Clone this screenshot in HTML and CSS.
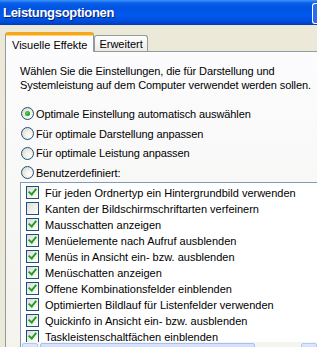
FILE: index.html
```html
<!DOCTYPE html>
<html lang="de">
<head>
    <meta charset="UTF-8">
    <title>Leistungsoptionen</title>
    <link rel="stylesheet" href="styles.css">
</head>
<body>
    <div class="window">
        <!-- Titelleiste -->
        <div class="titlebar">
            <span class="title">Leistungsoptionen</span>
            <span class="title-btn"></span>
        </div>

        <div class="content">
            <!-- Registerkarten -->
            <div class="tabs">
                <div class="tab active">Visuelle Effekte</div>
                <div class="tab">Erweitert</div>
            </div>

            <div class="page">
                <p class="intro">Wählen Sie die Einstellungen, die für Darstellung und<br>Systemleistung auf dem Computer verwendet werden sollen.</p>

                <div class="options">
                    <label class="option"><span class="radio checked"></span>Optimale Einstellung automatisch auswählen</label>
                    <label class="option"><span class="radio"></span>Für optimale Darstellung anpassen</label>
                    <label class="option"><span class="radio"></span>Für optimale Leistung anpassen</label>
                    <label class="option"><span class="radio"></span>Benutzerdefiniert:</label>
                </div>

                <div class="listbox">
                    <div class="items">
                        <div class="item"><span class="check on"></span>Für jeden Ordnertyp ein Hintergrundbild verwenden</div>
                        <div class="item"><span class="check"></span>Kanten der Bildschirmschriftarten verfeinern</div>
                        <div class="item"><span class="check on"></span>Mausschatten anzeigen</div>
                        <div class="item"><span class="check on"></span>Menüelemente nach Aufruf ausblenden</div>
                        <div class="item"><span class="check on"></span>Menüs in Ansicht ein- bzw. ausblenden</div>
                        <div class="item"><span class="check on"></span>Menüschatten anzeigen</div>
                        <div class="item"><span class="check on"></span>Offene Kombinationsfelder einblenden</div>
                        <div class="item"><span class="check on"></span>Optimierten Bildlauf für Listenfelder verwenden</div>
                        <div class="item"><span class="check on"></span>Quickinfo in Ansicht ein- bzw. ausblenden</div>
                        <div class="item"><span class="check on"></span>Taskleistenschaltfächen einblenden</div>
                    </div>
                    <!-- horizontale Bildlaufleiste -->
                    <div class="hscroll">
                        <span class="sb-arrow"></span>
                        <span class="sb-thumb"></span>
                        <span class="sb-track"></span>
                        <span class="sb-arrow"></span>
                    </div>
                </div>
            </div>
        </div>
    </div>
</body>
</html>
```

FILE: styles.css
```css
body {
    margin: 0;
    overflow: hidden;
    font-family: "Liberation Sans", Arial, sans-serif;
    font-size: 11px;
    color: #000;
    background: #ece9d8;
}
.window {
    width: 317px;
    height: 347px;
    overflow: hidden;
    background: #ece9d8;
}
.titlebar {
    height: 25px;
    display: flex;
    align-items: center;
    justify-content: space-between;
    background: linear-gradient(#3d95ff 0, #0a5fe8 3px, #0054e3 8px, #0058ee 16px, #004bd8 22px, #0039b8 25px);
    box-sizing: border-box;
    padding: 0 0 0 3px;
}
.title {
    color: #fff;
    font-family: "Liberation Sans", Arial, sans-serif;
    font-weight: bold;
    font-size: 13px;
    letter-spacing: -0.3px;
    text-shadow: 1px 1px 0 #0a1e6e;
    margin-top: -1px;
}
.title-btn {
    width: 4px;
    height: 19px;
    margin-top: 1px;
    border: 1px solid #fff;
    border-right: none;
    border-radius: 3px 0 0 3px;
    background: #2c6cf2;
}
.content {
    padding: 7px 0 0 5px;
}
.tabs {
    display: flex;
    align-items: flex-end;
    height: 19px;
    position: relative;
    z-index: 1;
}
.tab {
    height: 16px;
    box-sizing: border-box;
    padding: 1px 4px 0 4px;
    border: 1px solid #919b9c;
    border-bottom: none;
    border-radius: 3px 3px 0 0;
    background: linear-gradient(#fefefe, #ecebe6);
    line-height: 15px;
}
.tab.active {
    height: 20px;
    margin-bottom: -1px;
    padding: 3px 6px 0 6px;
    border-top: 3px solid #f5a623;
    background: #fcfcfe;
    box-shadow: inset 0 1px 0 #ffd86b;
}
.page {
    width: 330px;
    height: 300px;
    box-sizing: border-box;
    border-top: 1px solid #919b9c;
    border-left: 1px solid #919b9c;
    background: linear-gradient(#fcfcfe, #f4f3ee);
    padding: 12px 0 0 14px;
}
.intro {
    margin: 0;
    line-height: 14px;
    letter-spacing: -0.1px;
}
.options {
    margin-top: 12px;
    display: flex;
    flex-direction: column;
    letter-spacing: -0.1px;
}
.option {
    height: 19.7px;
    display: flex;
    align-items: center;
}
.radio {
    width: 11px;
    height: 11px;
    margin: 0 2px 0 1px;
    border: 1px solid #1c5180;
    border-radius: 50%;
    background: radial-gradient(circle at 65% 65%, #ffffff 0, #f0efe8 40%, #d4d1c4 100%);
    display: flex;
    align-items: center;
    justify-content: center;
}
.radio.checked::after {
    content: "";
    width: 5px;
    height: 5px;
    border-radius: 50%;
    background: radial-gradient(circle at 40% 40%, #5fd35f, #21a121 60%, #117511);
}
.listbox {
    margin-top: -1px;
    height: 200px;
    box-sizing: border-box;
    border: 1px solid #7f9db9;
    background: #fff;
}
.items {
    height: 159px;
    overflow: hidden;
    box-sizing: border-box;
    padding: 2px 0 0 5px;
}
.item {
    height: 16px;
    display: flex;
    align-items: center;
}
.check {
    width: 11px;
    height: 11px;
    margin-right: 6px;
    border: 1px solid #1c5180;
    background: linear-gradient(135deg, #dcdcd7, #fbfbf8 90%);
    position: relative;
}
.check.on::after {
    content: "";
    position: absolute;
    left: 3px;
    top: 0px;
    width: 3px;
    height: 6px;
    border: solid #21a121;
    border-width: 0 2px 2px 0;
    transform: rotate(40deg);
}
.hscroll {
    height: 17px;
    width: 296px;
    display: flex;
    gap: 1px;
    padding: 1px 0 0 1px;
    box-sizing: border-box;
    background: #f4f4f0;
}
.sb-arrow {
    width: 16px;
    height: 16px;
    border: 1px solid #b4c8f6;
    border-radius: 2px;
    box-sizing: border-box;
    background: linear-gradient(#dce6fd, #c2d3fb);
}
.sb-thumb {
    width: 215px;
    height: 16px;
    margin-left: 1px;
    border: 1px solid #a9bff3;
    border-radius: 2px;
    box-sizing: border-box;
    background: linear-gradient(#d6e2fe, #bfd1fa);
}
.sb-track {
    flex: 1;
}
```
